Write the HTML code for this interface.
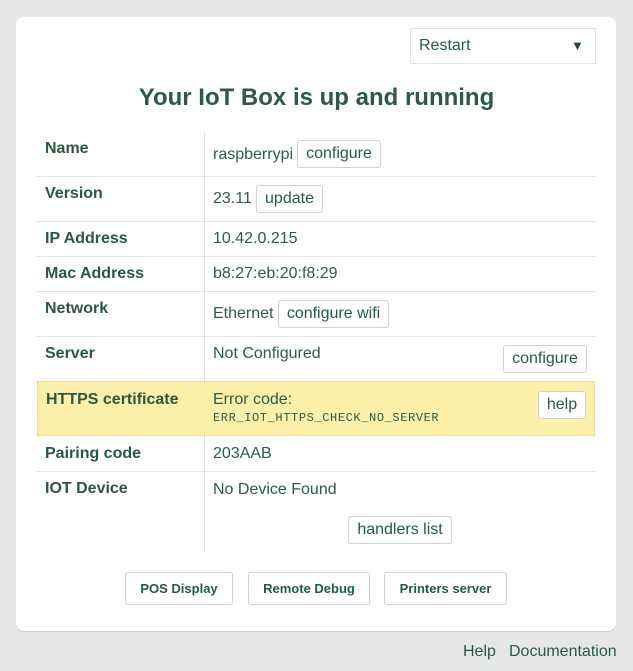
<!DOCTYPE html>
<html><head><meta charset="utf-8"><style>
*{box-sizing:border-box;margin:0;padding:0}
body{width:633px;height:671px;background:#e6e8e7;font-family:"Liberation Sans",sans-serif;position:relative;overflow:hidden;color:#2e5a48}
.card{position:absolute;left:16px;top:17px;width:600px;height:614px;background:#fff;border-radius:8px;box-shadow:0 1px 1px #c8cbca}
.a{position:absolute;white-space:nowrap}
.lbl{font-weight:bold;font-size:16px;color:#2b5741}
.val{font-size:16px;color:#2e5a48}
.btn{position:absolute;border:1px solid #cfd2d1;border-radius:3px;background:#fff;font-size:16px;color:#1f5a4e;text-align:center;white-space:nowrap}
.hl{position:absolute;height:1px;background:#e2e4e3;left:37px;width:558px}
.bb{position:absolute;border:1px solid #cfd2d1;border-radius:3px;background:#fff;font-size:13px;font-weight:bold;color:#1f5a4e;text-align:center;height:33px;line-height:31px;top:572px}
</style></head><body>
<div class="card"></div>
<div class="a" style="left:410px;top:28px;width:186px;height:36px;border:1px solid #e2e4e3"></div>
<div class="a val" style="left:419px;top:37px;color:#1f5a4e">Restart</div>
<div class="a" style="left:571px;top:38px;font-size:13px;color:#1f4a3a">▼</div>
<div class="a" style="left:0;width:633px;text-align:center;top:84px;font-size:24px;font-weight:bold;color:#2b5a48">Your IoT Box is up and running</div>

<div class="a" style="left:204px;top:132px;width:1px;height:419px;background:#e2e4e3"></div>
<div class="hl" style="top:176px"></div>
<div class="hl" style="top:221px"></div>
<div class="hl" style="top:256px"></div>
<div class="hl" style="top:291px"></div>
<div class="hl" style="top:336px"></div>
<div class="hl" style="top:471px"></div>
<div class="a" style="left:37px;top:381px;width:558px;height:55px;background:#fcefaa;border:1px dotted #d8cf95"></div>

<div class="a lbl" style="left:45px;top:140px">Name</div>
<div class="a val" style="left:213px;top:146px">raspberrypi</div>
<div class="btn" style="left:297px;top:140px;width:84px;height:28px;line-height:26px">configure</div>

<div class="a lbl" style="left:45px;top:185px">Version</div>
<div class="a val" style="left:213px;top:190px">23.11</div>
<div class="btn" style="left:256px;top:185px;width:67px;height:28px;line-height:26px">update</div>

<div class="a lbl" style="left:45px;top:230px">IP Address</div>
<div class="a val" style="left:213px;top:230px">10.42.0.215</div>

<div class="a lbl" style="left:45px;top:265px">Mac Address</div>
<div class="a val" style="left:213px;top:265px">b8:27:eb:20:f8:29</div>

<div class="a lbl" style="left:45px;top:300px">Network</div>
<div class="a val" style="left:213px;top:305px">Ethernet</div>
<div class="btn" style="left:278px;top:300px;width:111px;height:28px;line-height:26px">configure wifi</div>

<div class="a lbl" style="left:45px;top:345px">Server</div>
<div class="a val" style="left:213px;top:345px">Not Configured</div>
<div class="btn" style="left:503px;top:345px;width:84px;height:28px;line-height:26px">configure</div>

<div class="a lbl" style="left:46px;top:391px">HTTPS certificate</div>
<div class="a val" style="left:213px;top:391px">Error code:</div>
<div class="a" style="left:213px;top:411px;font-family:'Liberation Mono',monospace;font-size:12px;letter-spacing:0.6px;color:#2e5a48">ERR_IOT_HTTPS_CHECK_NO_SERVER</div>
<div class="btn" style="left:538px;top:391px;width:48px;height:28px;line-height:26px">help</div>

<div class="a lbl" style="left:45px;top:445px">Pairing code</div>
<div class="a val" style="left:213px;top:445px">203AAB</div>

<div class="a lbl" style="left:45px;top:480px">IOT Device</div>
<div class="a val" style="left:213px;top:481px">No Device Found</div>
<div class="btn" style="left:348px;top:516px;width:104px;height:28px;line-height:26px">handlers list</div>

<div class="bb" style="left:125px;width:108px">POS Display</div>
<div class="bb" style="left:248px;width:122px">Remote Debug</div>
<div class="bb" style="left:384px;width:123px">Printers server</div>

<div class="a val" style="left:463px;top:643px;color:#1f5a4e">Help</div>
<div class="a val" style="left:509px;top:643px;color:#1f5a4e">Documentation</div>
</body></html>
